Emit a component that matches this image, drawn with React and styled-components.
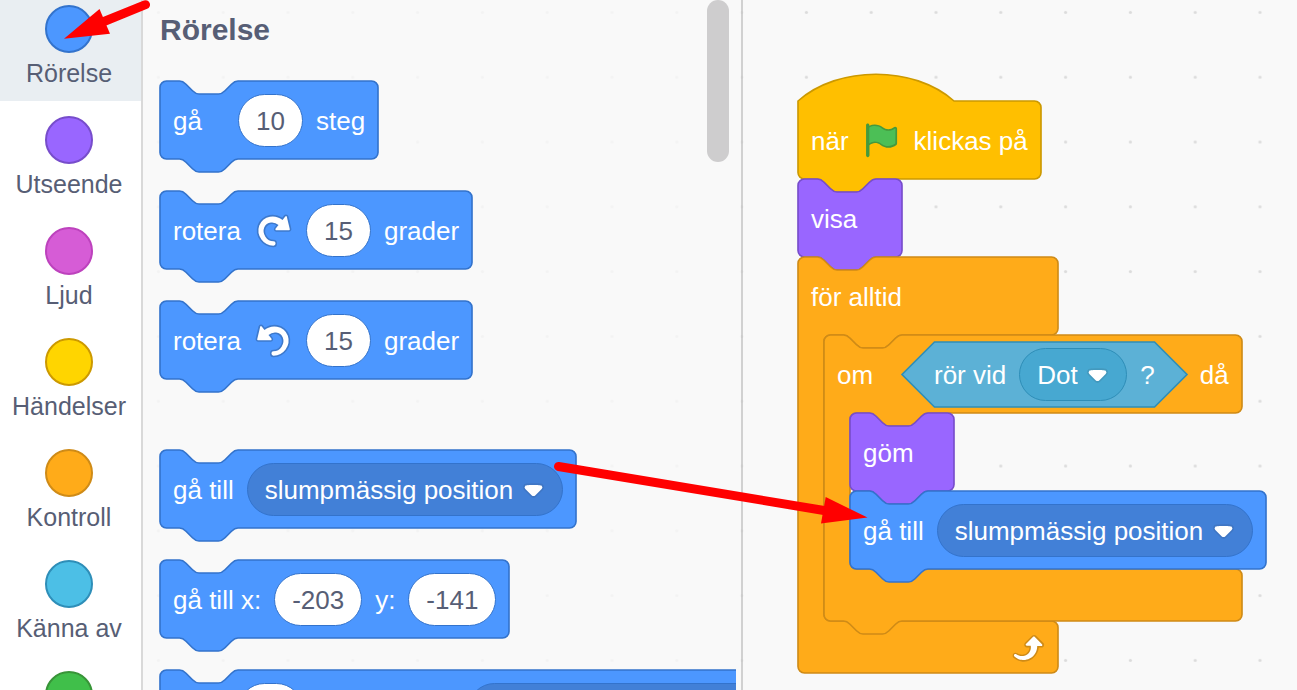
import React, { useLayoutEffect, useRef, useState } from "react";
import styled, { createGlobalStyle, css } from "styled-components";

const GlobalStyle = createGlobalStyle`
  *, *::before, *::after { box-sizing: border-box; }
  html, body { margin: 0; padding: 0; height: 100%; }
  body { overflow: hidden; background: #fff; font-family: "Liberation Sans", Arial, sans-serif; }
`;

/* One block unit in pixels; all block outlines are written in units. */
const U = 1.625;

const palette = {
  motion: { fill: "#4c97ff", stroke: "#3373cc", field: "#4280d7" },
  looks: { fill: "#9966ff", stroke: "#774dcb", field: "#855cd6" },
  events: { fill: "#ffbf00", stroke: "#cc9900", field: "#e6ac00" },
  control: { fill: "#ffab19", stroke: "#cf8b17", field: "#ec9c13" },
  sensing: { fill: "#5cb1d6", stroke: "#2e8eb8", field: "#47a8d1" },
};

const categories = [
  { name: "Rörelse", fill: "#4c97ff", stroke: "#3373cc", active: true },
  { name: "Utseende", fill: "#9966ff", stroke: "#774dcb" },
  { name: "Ljud", fill: "#d65cd6", stroke: "#bd42bd" },
  { name: "Händelser", fill: "#ffd500", stroke: "#cc9900" },
  { name: "Kontroll", fill: "#ffab19", stroke: "#cf8b17" },
  { name: "Känna av", fill: "#4cbfe6", stroke: "#2e8eb8" },
  { name: "Operatorer", fill: "#40bf4a", stroke: "#389438" },
];

/* ---------- page frame ---------- */

const Editor = styled.main`
  position: relative;
  display: flex;
  height: 100vh;
  overflow: hidden;
`;

const CategoryMenu = styled.nav`
  flex: none;
  display: flex;
  flex-direction: column;
  width: 143px;
  margin-top: -10px;
  border-right: 2px solid #d9d9d9;
  background: #fff;
`;

const CategoryButton = styled.button`
  flex: none;
  display: flex;
  flex-direction: column;
  align-items: center;
  gap: 5px;
  height: 111px;
  padding: 15px 3px 0 0;
  border: 0;
  background: ${(p) => (p.$active ? "#e9eef2" : "transparent")};
  color: #575e75;
  font: 25px/30px "Liberation Sans", Arial, sans-serif;
  white-space: nowrap;
  cursor: pointer;
`;

const CategoryDot = styled.span`
  flex: none;
  width: 48px;
  height: 48px;
  border: 2px solid ${(p) => p.$stroke};
  border-radius: 50%;
  background: ${(p) => p.$fill};
`;

const BlocksArea = styled.div`
  position: relative;
  flex: 1;
  display: flex;
  min-width: 0;
  background: #f9f9f9;
`;

const DotGrid = styled.svg`
  position: absolute;
  inset: 0;
  width: 100%;
  height: 100%;
`;

const Flyout = styled.section`
  position: relative;
  flex: none;
  width: 600px;
  padding-right: 5px;
  border-right: 2px solid rgba(0, 0, 0, 0.16);
  background: rgba(249, 249, 249, 0.8);
`;

const FlyoutScroll = styled.div`
  height: 100%;
  padding: 12px 0 0 17px;
  overflow: hidden;
`;

const FlyoutTitle = styled.h2`
  margin: 0;
  height: 69px;
  color: #575e75;
  font-size: 30px;
  line-height: 36px;
  font-weight: bold;
`;

const BlockList = styled.div`
  display: flex;
  flex-direction: column;
  align-items: flex-start;
  gap: 32px;
  margin-bottom: 71px;
`;

const ScrollThumb = styled.div`
  position: absolute;
  top: 0;
  right: 12px;
  width: 22px;
  height: 162px;
  border-radius: 11px;
  background: #cecdce;
`;

const Workspace = styled.section`
  position: relative;
  flex: 1;
  min-width: 0;
  padding: 101px 0 0 55px;
  overflow: hidden;
`;

const Stack = styled.div`
  display: flex;
  flex-direction: column;
  align-items: flex-start;
`;

/* ---------- block parts ---------- */

const BlockBox = styled.div`
  position: relative;
  flex: none;
  width: max-content;
  min-width: ${(p) => p.$min || 104}px;
`;

const Outline = styled.svg`
  position: absolute;
  top: 0;
  left: 0;
  width: 100%;
  height: 100%;
  overflow: visible;
`;

const Row = styled.div`
  position: relative;
  display: flex;
  align-items: center;
  gap: 13px;
  height: 78px;
  padding: 0 13px;
`;

const Label = styled.span`
  color: #fff;
  font-size: 26px;
  line-height: 30px;
  padding-top: 2px;
  white-space: pre;
  ${(p) => p.$clearNotch && css`min-width: 52px;`}
`;

const Mouth = styled.div`
  position: relative;
  width: 0;
  padding-left: 26px;
`;

const Foot = styled.div`
  position: relative;
  display: flex;
  align-items: center;
  justify-content: flex-end;
  height: 52px;
  padding: 0 13px;
`;

const Condition = styled.div`
  position: relative;
  height: 65px;
`;

const ConditionRow = styled.div`
  position: relative;
  display: flex;
  align-items: center;
  gap: 13px;
  height: 65px;
  padding: 0 32px;
`;

const NumberField = styled.input`
  width: ${(p) => (p.$wide ? 88 : 65)}px;
  height: 53px;
  padding: 2px 0 0;
  border: 1px solid #3373cc;
  border-radius: 27px;
  background: #fff;
  color: #575e75;
  font: 26px "Liberation Sans", Arial, sans-serif;
  text-align: center;
`;

const MenuWrap = styled.span`
  position: relative;
  display: block;
`;

const MenuSelect = styled.select`
  display: block;
  appearance: none;
  height: 53px;
  padding: 2px 48px 0 17px;
  border: 1px solid ${(p) => p.$tone.stroke};
  border-radius: 27px;
  background: ${(p) => p.$tone.field};
  color: #fff;
  font: 26px "Liberation Sans", Arial, sans-serif;
`;

const MenuArrow = styled.svg`
  position: absolute;
  top: 20px;
  right: 19px;
  width: 21px;
  height: 15px;
  pointer-events: none;
`;

const Icon = styled.svg`
  flex: none;
  width: 39px;
  height: 39px;
`;

const Annotations = styled.svg`
  position: absolute;
  inset: 0;
  width: 100%;
  height: 100%;
  pointer-events: none;
`;

/* ---------- outlines ---------- */

const NOTCH = "c2,0 3,1 4,2 l4,4 c1,1 2,2 4,2 h12 c2,0 3,-1 4,-2 l4,-4 c1,-1 2,-2 4,-2";
const BUMP = "c-2,0 -3,1 -4,2 l-4,4 c-1,1 -2,2 -4,2 h-12 c-2,0 -3,-1 -4,-2 l-4,-4 c-1,-1 -2,-2 -4,-2";
const topEdge = (w) => `M0,4 a4,4 0 0,1 4,-4 H12 ${NOTCH} H${w - 4} a4,4 0 0,1 4,4`;
const bottomEdge = (bump) => `a4,4 0 0,1 -4,4 ${bump ? `H48 ${BUMP}` : ""} H4 a4,4 0 0,1 -4,-4 Z`;

const outlines = {
  stack: (w, h) => `${topEdge(w)} V${h - 4} ${bottomEdge(true)}`,
  hat: (w, h) => `M0,0 c25,-22 71,-22 96,0 H${w - 4} a4,4 0 0,1 4,4 V${h - 4} ${bottomEdge(true)}`,
  wrap: (w, h) => wrapPath(w, h, true),
  wrapEnd: (w, h) => wrapPath(w, h, false),
  condition: (w, h) => `M${h / 2},0 H${w - h / 2} L${w},${h / 2} L${w - h / 2},${h} H${h / 2} L0,${h / 2} Z`,
};

function wrapPath(w, h, bump) {
  return `${topEdge(w)} V44 a4,4 0 0,1 -4,4 H64 ${BUMP} H20 a4,4 0 0,0 -4,4
    V${h - 36} a4,4 0 0,0 4,4 H${w - 4} a4,4 0 0,1 4,4 V${h - 4} ${bottomEdge(bump)}`;
}

/* Draws an outline that follows the measured size of its block. */
function Shape({ kind, tone }) {
  const ref = useRef(null);
  const [size, setSize] = useState(null);
  useLayoutEffect(() => {
    const host = ref.current.parentElement;
    const measure = () => setSize([host.offsetWidth / U, host.offsetHeight / U]);
    measure();
    const observer = new ResizeObserver(measure);
    observer.observe(host);
    return () => observer.disconnect();
  }, []);
  return (
    <Outline ref={ref} aria-hidden="true">
      {size && (
        <path d={outlines[kind](size[0], size[1])} transform={`scale(${U})`} fill={tone.fill} stroke={tone.stroke} />
      )}
    </Outline>
  );
}

/* ---------- blocks ---------- */

function Block({ tone = palette.motion, kind = "stack", children }) {
  return (
    <BlockBox>
      <Shape kind={kind} tone={tone} />
      <Row>{children}</Row>
    </BlockBox>
  );
}

function WrapBlock({ tone = palette.control, last, head, foot, children }) {
  return (
    <BlockBox $min={260}>
      <Shape kind={last ? "wrapEnd" : "wrap"} tone={tone} />
      <Row>{head}</Row>
      <Mouth>
        <Stack>{children}</Stack>
      </Mouth>
      <Foot>{foot}</Foot>
    </BlockBox>
  );
}

function Menu({ tone = palette.motion, value, label }) {
  return (
    <MenuWrap>
      <MenuSelect $tone={tone} aria-label={label} defaultValue={value}>
        <option>{value}</option>
      </MenuSelect>
      <MenuArrow viewBox="0 0 12.71 8.79" aria-hidden="true">
        <path
          fill="#231f20"
          opacity=".1"
          d="M12.71,2.44A2.41,2.41,0,0,1,12,4.16L8.08,8.08a2.45,2.45,0,0,1-3.45,0L.72,4.16A2.42,2.42,0,0,1,0,2.44,2.48,2.48,0,0,1,.71.71C1,.47,1.43,0,6.36,0S11.75.46,12,.71A2.44,2.44,0,0,1,12.71,2.44Z"
        />
        <path
          fill="#fff"
          d="M6.36,7.79a1.43,1.43,0,0,1-1-.42L1.42,3.45a1.44,1.44,0,0,1,0-2c.56-.56,9.31-.56,9.87,0a1.44,1.44,0,0,1,0,2L7.37,7.37A1.43,1.43,0,0,1,6.36,7.79Z"
        />
      </MenuArrow>
    </MenuWrap>
  );
}

function TurnIcon({ left }) {
  return (
    <Icon viewBox="0 0 24 24" aria-hidden="true">
      <g transform={left ? "translate(24 0) scale(-1 1)" : undefined}>
        <path
          fill="#3d79cc"
          d="M22.68,12.2a1.6,1.6,0,0,1-1.27.63H13.72a1.59,1.59,0,0,1-1.16-2.58l1.12-1.41a4.82,4.82,0,0,0-3.14-.77,4.31,4.31,0,0,0-2,.8,4.25,4.25,0,0,0-1.34,1.73,5.06,5.06,0,0,0,.54,4.62A5.58,5.58,0,0,0,12,17.74h0a2.26,2.26,0,0,1-.16,4.52A10.25,10.25,0,0,1,3.74,18,10.14,10.14,0,0,1,2.25,8.78,9.7,9.7,0,0,1,5.08,4.64,9.92,9.92,0,0,1,9.66,2.5a10.66,10.66,0,0,1,7.72,1.68l1.08-1.35a1.57,1.57,0,0,1,1.24-.6,1.6,1.6,0,0,1,1.54,1.21l1.7,7.37A1.57,1.57,0,0,1,22.68,12.2Z"
        />
        <path
          fill="#fff"
          d="M21.38,11.83H13.77a.59.59,0,0,1-.43-1l1.75-2.19a5.9,5.9,0,0,0-4.7-1.58,5.07,5.07,0,0,0-4.11,3.17A6,6,0,0,0,7,15.77a6.51,6.51,0,0,0,5,2.92,1.31,1.31,0,0,1-.08,2.62,9.3,9.3,0,0,1-7.35-3.82A9.16,9.16,0,0,1,3.17,9.12,8.51,8.51,0,0,1,5.71,5.4,8.76,8.76,0,0,1,9.82,3.48a9.71,9.71,0,0,1,7.75,2.07l1.67-2.1a.59.59,0,0,1,1,.21L22,11.08A.59.59,0,0,1,21.38,11.83Z"
        />
      </g>
    </Icon>
  );
}

function FlagIcon() {
  return (
    <Icon viewBox="0 0 24 24" role="img" aria-label="grön flagga">
      <path
        fill="#45993d"
        d="M20.8,3.7c-0.4-0.2-0.9-0.1-1.2,0.2c-2,1.6-4.8,1.6-6.8,0c-2.3-1.9-5.6-2.3-8.3-1v-0.4c0-0.6-0.5-1-1-1s-1,0.4-1,1v18.8c0,0.5,0.5,1,1,1h0.1c0.5,0,1-0.5,1-1v-6.4c1-0.7,2.1-1.2,3.4-1.3c1.2,0,2.4,0.4,3.4,1.2c2.9,2.3,7,2.3,9.8,0c0.3-0.2,0.4-0.5,0.4-0.9V4.7C21.6,4.2,21.3,3.8,20.8,3.7z"
      />
      <path
        fill="#4cbf56"
        d="M20.6,4.8l-0.1,9.1c-2.5,2-6.1,2-8.6,0.1c-1.1-0.9-2.5-1.4-4-1.4c-1.2,0.1-2.3,0.5-3.4,1.1V4c2.5-1.4,5.5-1.1,7.7,0.6c2.4,1.9,5.7,1.9,8.1,0h0.1C20.5,4.7,20.6,4.7,20.6,4.8z"
      />
    </Icon>
  );
}

function LoopIcon() {
  return (
    <Icon viewBox="0 0 24 24" aria-hidden="true">
      <path
        fill="#cf8b17"
        d="M23.3,11c-0.3,0.6-0.9,1-1.5,1h-1.6c-0.1,1.3-0.5,2.5-1.1,3.6c-0.9,1.7-2.3,3.2-4.1,4.1c-1.7,0.9-3.6,1.2-5.5,0.9c-1.8-0.3-3.5-1.1-4.9-2.3c-0.7-0.7-0.7-1.9,0-2.6c0.6-0.6,1.6-0.7,2.3-0.2H7c0.9,0.6,1.9,0.9,2.9,0.9s1.9-0.3,2.7-0.9c1.1-0.8,1.8-2.1,1.8-3.5h-1.5c-0.9,0-1.7-0.7-1.7-1.7c0-0.4,0.2-0.9,0.5-1.2l4.4-4.4c0.7-0.6,1.7-0.6,2.4,0L23,9.2C23.5,9.7,23.6,10.4,23.3,11z"
      />
      <path
        fill="#fff"
        d="M21.8,11h-2.6c0,1.5-0.3,2.9-1,4.2c-0.8,1.6-2.1,2.8-3.7,3.6c-1.5,0.8-3.3,1.1-4.9,0.8c-1.6-0.2-3.2-1-4.4-2.1c-0.4-0.3-0.4-0.9-0.1-1.2c0.3-0.4,0.9-0.4,1.2-0.1l0,0c1,0.7,2.2,1.1,3.4,1.1s2.3-0.3,3.3-1c0.9-0.6,1.6-1.5,2-2.6c0.3-0.9,0.4-1.8,0.2-2.8h-2.4c-0.4,0-0.7-0.3-0.7-0.7c0-0.2,0.1-0.3,0.2-0.4l4.4-4.4c0.3-0.3,0.7-0.3,0.9,0L22,9.8c0.3,0.3,0.4,0.6,0.3,0.9S22,11,21.8,11z"
      />
    </Icon>
  );
}

function GoToBlock() {
  return (
    <Block>
      <Label>gå till</Label>
      <Menu value="slumpmässig position" label="gå till" />
    </Block>
  );
}

function TurnBlock({ left }) {
  return (
    <Block>
      <Label>rotera</Label>
      <TurnIcon left={left} />
      <NumberField defaultValue="15" aria-label="grader" />
      <Label>grader</Label>
    </Block>
  );
}

export default function App() {
  return (
    <>
      <GlobalStyle />
      <Editor>
        <CategoryMenu aria-label="Kategorier">
          {categories.map((c) => (
            <CategoryButton key={c.name} type="button" $active={c.active}>
              <CategoryDot $fill={c.fill} $stroke={c.stroke} />
              {c.name}
            </CategoryButton>
          ))}
        </CategoryMenu>

        <BlocksArea>
          <DotGrid aria-hidden="true">
            <defs>
              <pattern id="dots" x="-17" y="-20" width="64.8" height="64.8" patternUnits="userSpaceOnUse">
                <circle cx="32.4" cy="32.4" r="1.6" fill="#dcdcdc" />
              </pattern>
            </defs>
            <rect width="100%" height="100%" fill="url(#dots)" />
          </DotGrid>

          <Flyout>
            <FlyoutScroll>
              <FlyoutTitle>Rörelse</FlyoutTitle>
              <BlockList>
                <Block>
                  <Label $clearNotch>gå</Label>
                  <NumberField defaultValue="10" aria-label="steg" />
                  <Label>steg</Label>
                </Block>
                <TurnBlock />
                <TurnBlock left />
              </BlockList>
              <BlockList>
                <GoToBlock />
                <Block>
                  <Label>gå till x:</Label>
                  <NumberField $wide defaultValue="-203" aria-label="x" />
                  <Label>y:</Label>
                  <NumberField $wide defaultValue="-141" aria-label="y" />
                </Block>
                <Block>
                  <Label $clearNotch>glid</Label>
                  <NumberField defaultValue="1" aria-label="sekunder" />
                  <Label>sekunder till</Label>
                  <Menu value="slumpmässig position" label="glid till" />
                </Block>
              </BlockList>
            </FlyoutScroll>
            <ScrollThumb />
          </Flyout>

          <Workspace>
            <Stack>
              <Block tone={palette.events} kind="hat">
                <Label>när</Label>
                <FlagIcon />
                <Label>klickas på</Label>
              </Block>
              <Block tone={palette.looks}>
                <Label>visa</Label>
              </Block>
              <WrapBlock last head={<Label>för alltid</Label>} foot={<LoopIcon />}>
                <WrapBlock
                  head={
                    <>
                      <Label $clearNotch>om</Label>
                      <Condition>
                        <Shape kind="condition" tone={palette.sensing} />
                        <ConditionRow>
                          <Label>rör vid</Label>
                          <Menu tone={palette.sensing} value="Dot" label="rör vid" />
                          <Label>?</Label>
                        </ConditionRow>
                      </Condition>
                      <Label>då</Label>
                    </>
                  }
                >
                  <Block tone={palette.looks}>
                    <Label>göm</Label>
                  </Block>
                  <GoToBlock />
                </WrapBlock>
              </WrapBlock>
            </Stack>
          </Workspace>
        </BlocksArea>

        <Annotations aria-hidden="true">
          <g stroke="#f00" strokeWidth="9" strokeLinecap="round">
            <path d="M145.5,4.7 L104,21.5" />
            <path d="M558.5,466.5 L824,510.5" />
          </g>
          <g fill="#f00">
            <path d="M64,38.7 L99.5,9 L110,33.7 Z" />
            <path d="M867.5,517.6 L825.7,497 L821,523.5 Z" />
          </g>
        </Annotations>
      </Editor>
    </>
  );
}
